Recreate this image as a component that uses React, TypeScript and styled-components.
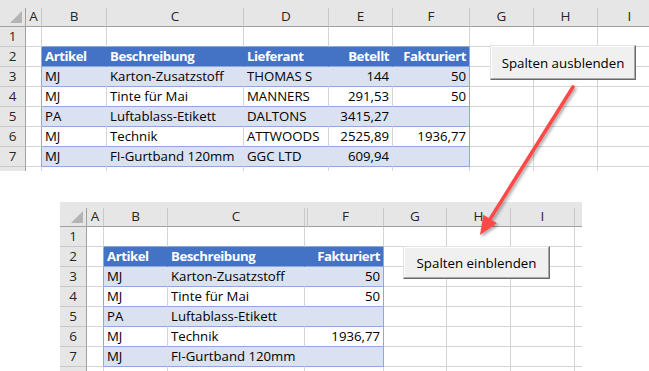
import React from 'react';
import styled, { createGlobalStyle } from 'styled-components';

const GRID = '#D4D4D4';
const HEAD_BG = '#E6E6E6';
const HEAD_LINE = '#C8C8C8';
const HEAD_EDGE = '#A0A0A0';
const TABLE_BLUE = '#4472C4';
const TABLE_BAND = '#D9E1F2';
const TABLE_LINE = '#8EA9DB';
const FONT = '"Open Sans", "Noto Sans", "Liberation Sans", sans-serif';

const GlobalStyle = createGlobalStyle`
  html, body {
    margin: 0;
    padding: 0;
    background: #ffffff;
  }
  body {
    font-family: ${FONT};
  }
`;

type Align = 'left' | 'right';

interface Column {
  letter: string;
  width: number;
  marker?: boolean;
  partial?: boolean;
}

interface Field {
  col: string;
  title: string;
  align: Align;
}

interface SheetProps {
  columns: Column[];
  fields: Field[];
  records: string[][];
  rowCount: number;
  labelledRows: number;
  strip: number;
  inset: number;
  width: number;
  height: number;
  top: number;
  children?: React.ReactNode;
}

const Page = styled.div`
  position: relative;
  width: 649px;
  height: 371px;
  overflow: hidden;
  display: flex;
  flex-direction: column;
`;

const SheetFrame = styled.div<{ $inset: number; $width: number; $height: number; $top: number }>`
  position: relative;
  flex: none;
  margin-left: ${(p) => p.$inset}px;
  margin-top: ${(p) => p.$top}px;
  width: ${(p) => p.$width}px;
  height: ${(p) => p.$height}px;
  overflow: hidden;
`;

const HeadStrip = styled.div<{ $h: number }>`
  height: ${(p) => p.$h}px;
  background: ${HEAD_BG};
`;

const SheetGrid = styled.div<{ $cols: string; $rows: number }>`
  display: grid;
  grid-template-columns: ${(p) => p.$cols};
  grid-template-rows: 19px repeat(${(p) => p.$rows}, 20px);
  width: max-content;
`;

const Corner = styled.div`
  position: relative;
  box-sizing: border-box;
  background: ${HEAD_BG};
  border-right: 1px solid ${HEAD_EDGE};
  border-bottom: 1px solid ${HEAD_EDGE};

  &::after {
    content: '';
    position: absolute;
    right: 3px;
    bottom: 3px;
    width: 0;
    height: 0;
    border-left: 12px solid transparent;
    border-bottom: 12px solid #b4b4b4;
  }
`;

const ColHead = styled.div`
  box-sizing: border-box;
  background: ${HEAD_BG};
  border-right: 1px solid ${HEAD_LINE};
  border-bottom: 1px solid ${HEAD_EDGE};
  display: flex;
  align-items: center;
  justify-content: center;
  font-size: 13.5px;
  color: #262626;
  line-height: 1;
`;

const RowNum = styled.div`
  box-sizing: border-box;
  background: ${HEAD_BG};
  border-right: 1px solid ${HEAD_EDGE};
  border-bottom: 1px solid ${HEAD_LINE};
  display: flex;
  align-items: center;
  justify-content: center;
  font-size: 13.5px;
  color: #262626;
  line-height: 1;
`;

const Cell = styled.div<{
  $fill: string;
  $right: string;
  $bottom: string;
  $align: Align;
  $head: boolean;
}>`
  box-sizing: border-box;
  background: ${(p) => p.$fill};
  border-right: 1px solid ${(p) => p.$right};
  border-bottom: 1px solid ${(p) => p.$bottom};
  display: flex;
  align-items: center;
  justify-content: ${(p) => (p.$align === 'right' ? 'flex-end' : 'flex-start')};
  padding: 0 3px 0 3px;
  font-size: 13.2px;
  font-weight: ${(p) => (p.$head ? 700 : 400)};
  letter-spacing: ${(p) => (p.$head ? '-0.45px' : '0')};
  color: ${(p) => (p.$head ? '#ffffff' : '#000000')};
  white-space: nowrap;
  overflow: hidden;
  line-height: 1;
`;

const MacroButton = styled.button<{ $x: number; $y: number; $w: number; $h: number }>`
  position: absolute;
  left: ${(p) => p.$x}px;
  top: ${(p) => p.$y}px;
  width: ${(p) => p.$w}px;
  height: ${(p) => p.$h}px;
  box-sizing: border-box;
  margin: 0;
  padding: 0;
  background: #f0f0f0;
  border: 1px solid;
  border-color: #e3e3e3 #6a6a6a #6a6a6a #e3e3e3;
  box-shadow: inset -1px -1px 0 #a9a9a9, inset 1px 1px 0 #ffffff;
  font-family: ${FONT};
  font-size: 13.3px;
  color: #000000;
  cursor: default;
`;

const ArrowLayer = styled.svg`
  position: absolute;
  left: 0;
  top: 0;
  width: 649px;
  height: 371px;
  pointer-events: none;
`;

function Sheet({
  columns,
  fields,
  records,
  rowCount,
  labelledRows,
  strip,
  inset,
  width,
  height,
  top,
  children,
}: SheetProps) {
  const template = columns.map((c) => `${c.width}px`).join(' ');
  const dataCols = columns.slice(1);
  const fieldIdx = fields.map((f) => dataCols.findIndex((c) => c.letter === f.col));
  const firstIdx = Math.min(...fieldIdx);
  const lastIdx = Math.max(...fieldIdx);
  const lastTableRow = 2 + records.length;

  const cells: React.ReactNode[] = [];
  cells.push(<Corner key="corner" />);
  dataCols.forEach((c) =>
    cells.push(<ColHead key={`h-${c.letter}`}>{c.marker || c.partial ? '' : c.letter}</ColHead>)
  );

  for (let r = 1; r <= rowCount; r++) {
    cells.push(<RowNum key={`n-${r}`}>{r <= labelledRows ? r : ''}</RowNum>);
    const inTableRow = r >= 2 && r <= lastTableRow;
    dataCols.forEach((c, idx) => {
      const inTableCol = idx >= firstIdx && idx <= lastIdx;
      let fill = '#ffffff';
      let right = c.marker ? '#ffffff' : GRID;
      let bottom = GRID;
      let text = '';
      let align: Align = 'left';
      let head = false;

      if (inTableRow && inTableCol) {
        const kind = r === 2 ? 'head' : (r - 3) % 2 === 0 ? 'band' : 'plain';
        fill = kind === 'head' ? TABLE_BLUE : kind === 'band' ? TABLE_BAND : '#ffffff';
        head = kind === 'head';
        bottom = TABLE_LINE;
        if (idx === lastIdx) right = TABLE_LINE;
        else if (c.marker || kind !== 'plain') right = fill;
        else right = GRID;
        const f = fields.findIndex((fd) => fd.col === c.letter);
        if (f >= 0 && !c.marker) {
          align = fields[f].align;
          text = r === 2 ? fields[f].title : records[r - 3][f];
        }
      } else if (r === 1 && inTableCol) {
        bottom = TABLE_LINE;
      } else if (inTableRow && idx === firstIdx - 1) {
        right = TABLE_LINE;
      }

      cells.push(
        <Cell key={`c-${r}-${idx}`} $fill={fill} $right={right} $bottom={bottom} $align={align} $head={head}>
          {text}
        </Cell>
      );
    });
  }

  return (
    <SheetFrame $inset={inset} $width={width} $height={height} $top={top}>
      <HeadStrip $h={strip} />
      <SheetGrid $cols={template} $rows={rowCount}>
        {cells}
      </SheetGrid>
      {children}
    </SheetFrame>
  );
}

const fullColumns: Column[] = [
  { letter: '#', width: 26 },
  { letter: 'A', width: 16 },
  { letter: 'B', width: 65 },
  { letter: 'C', width: 137 },
  { letter: 'D', width: 85 },
  { letter: 'E', width: 64 },
  { letter: 'F', width: 77 },
  { letter: 'G', width: 64 },
  { letter: 'H', width: 64 },
  { letter: 'I', width: 64 },
];

const fullFields: Field[] = [
  { col: 'B', title: 'Artikel', align: 'left' },
  { col: 'C', title: 'Beschreibung', align: 'left' },
  { col: 'D', title: 'Lieferant', align: 'left' },
  { col: 'E', title: 'Betellt', align: 'right' },
  { col: 'F', title: 'Fakturiert', align: 'right' },
];

const fullRecords = [
  ['MJ', 'Karton-Zusatzstoff', 'THOMAS S', '144', '50'],
  ['MJ', 'Tinte für Mai', 'MANNERS', '291,53', '50'],
  ['PA', 'Luftablass-Etikett', 'DALTONS', '3415,27', ''],
  ['MJ', 'Technik', 'ATTWOODS', '2525,89', '1936,77'],
  ['MJ', 'FI-Gurtband 120mm', 'GGC LTD', '609,94', ''],
];

const hiddenColumns: Column[] = [
  { letter: '#', width: 27 },
  { letter: 'A', width: 17 },
  { letter: 'B', width: 64 },
  { letter: 'C', width: 137 },
  { letter: 'DE', width: 3, marker: true },
  { letter: 'F', width: 76 },
  { letter: 'G', width: 63 },
  { letter: 'H', width: 64 },
  { letter: 'I', width: 64 },
  { letter: 'J', width: 64, partial: true },
];

const hiddenFields: Field[] = [
  { col: 'B', title: 'Artikel', align: 'left' },
  { col: 'C', title: 'Beschreibung', align: 'left' },
  { col: 'F', title: 'Fakturiert', align: 'right' },
];

const hiddenRecords = fullRecords.map((r) => [r[0], r[1], r[4]]);

// Red pointer from the first button down to the second one
const from = { x: 573, y: 87 };
const tip = { x: 480, y: 235 };
const len = Math.hypot(tip.x - from.x, tip.y - from.y);
const ux = (tip.x - from.x) / len;
const uy = (tip.y - from.y) / len;
const headLen = 19;
const headHalf = 8;
const base = { x: tip.x - ux * headLen, y: tip.y - uy * headLen };
const wingA = { x: base.x - uy * headHalf, y: base.y + ux * headHalf };
const wingB = { x: base.x + uy * headHalf, y: base.y - ux * headHalf };

export default function App() {
  return (
    <>
      <GlobalStyle />
      <Page>
        <Sheet
          columns={fullColumns}
          fields={fullFields}
          records={fullRecords}
          rowCount={8}
          labelledRows={7}
          strip={8}
          inset={0}
          width={649}
          height={171}
          top={0}
        >
          <MacroButton $x={490} $y={45} $w={146} $h={35}>
            Spalten ausblenden
          </MacroButton>
        </Sheet>
        <Sheet
          columns={hiddenColumns}
          fields={hiddenFields}
          records={hiddenRecords}
          rowCount={8}
          labelledRows={7}
          strip={6}
          inset={60}
          width={522}
          height={169}
          top={31}
        >
          <MacroButton $x={343} $y={44} $w={147} $h={33}>
            Spalten einblenden
          </MacroButton>
        </Sheet>
        <ArrowLayer viewBox="0 0 649 371">
          <defs>
            <filter id="arrowShade" x="-20%" y="-20%" width="140%" height="140%">
              <feDropShadow dx="1.5" dy="2" stdDeviation="1.6" floodColor="#000000" floodOpacity="0.35" />
            </filter>
          </defs>
          <g filter="url(#arrowShade)">
            <line
              x1={from.x}
              y1={from.y}
              x2={base.x + ux * 2}
              y2={base.y + uy * 2}
              stroke="#FF4848"
              strokeWidth={3.6}
              strokeLinecap="round"
            />
            <polygon
              points={`${tip.x},${tip.y} ${wingA.x},${wingA.y} ${wingB.x},${wingB.y}`}
              fill="#FF4848"
            />
          </g>
        </ArrowLayer>
      </Page>
    </>
  );
}
